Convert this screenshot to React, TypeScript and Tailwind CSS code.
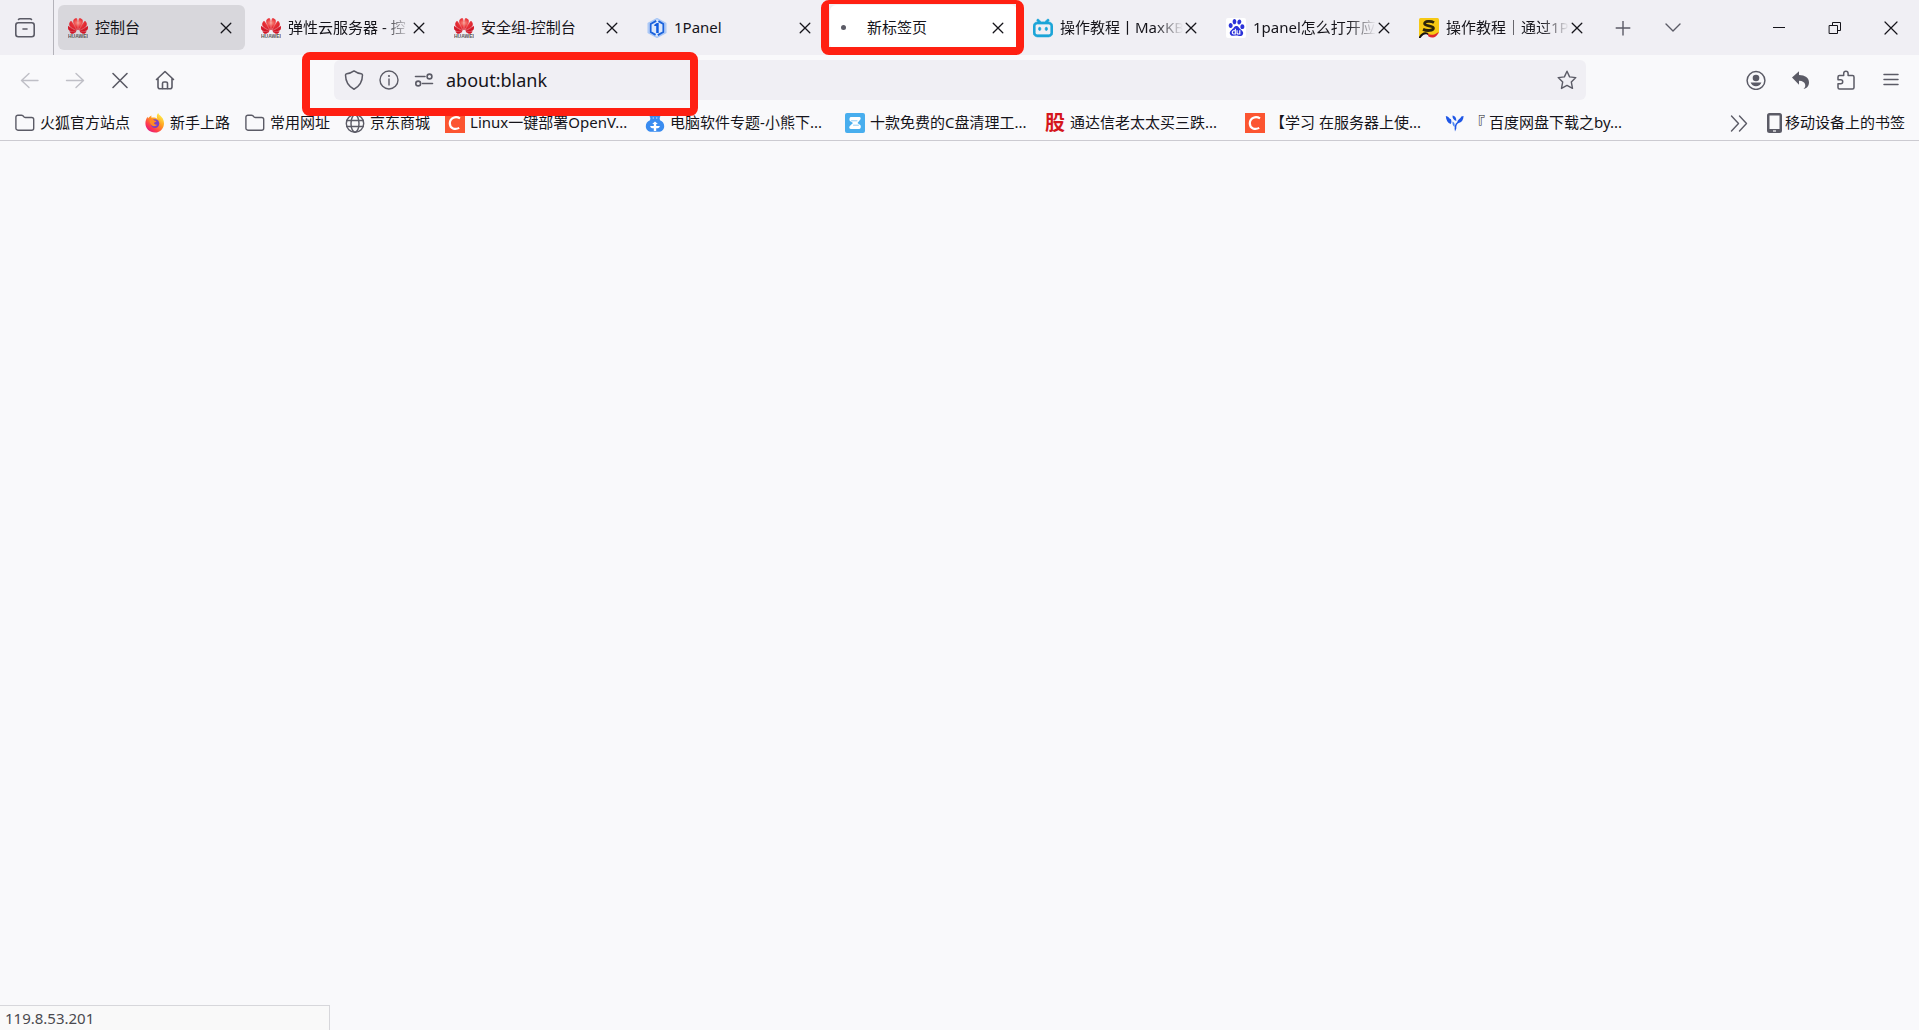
import type { ReactNode, SVGProps } from "react";
import { SiBaidu, SiBilibili, SiHuawei } from "react-icons/si";
import { twMerge } from "tailwind-merge";

function Icon({ className, children, ...props }: SVGProps<SVGSVGElement>) {
	return (
		<svg
			viewBox="0 0 20 20"
			fill="none"
			stroke="currentColor"
			strokeWidth="1.4"
			strokeLinecap="round"
			strokeLinejoin="round"
			aria-hidden="true"
			className={twMerge("w-5 h-5 shrink-0", className)}
			{...props}
		>
			{children}
		</svg>
	);
}

function HuaweiIcon() {
	return (
		<span className="flex flex-col items-center w-5 h-5 shrink-0 overflow-hidden">
			<svg width="0" height="0" className="absolute" aria-hidden="true">
				<radialGradient id="petal" cx="0.5" cy="0.3" r="0.6">
					<stop offset="0" stopColor="#fa9184" />
					<stop offset="0.45" stopColor="#ea3338" />
					<stop offset="1" stopColor="#cf1526" />
				</radialGradient>
			</svg>
			<SiHuawei
				fill="url(#petal)"
				stroke="url(#petal)"
				strokeWidth="0.7"
				preserveAspectRatio="none"
				viewBox="0 2.5 24 19"
				className="w-5 h-4 shrink-0"
			/>
			<svg viewBox="0 0 20 4" className="w-5 h-1 shrink-0" aria-hidden="true">
				<text
					x="10"
					y="3.8"
					textAnchor="middle"
					fontFamily="Liberation Sans, sans-serif"
					fontSize="5"
					fontWeight="700"
					fill="#5a5555"
				>
					HUAWEI
				</text>
			</svg>
		</span>
	);
}

function OnePanelIcon() {
	return (
		<Icon>
			<path
				d="M10 .6 18.800 5.300V14.700L10 19.400 1.200 14.700V5.300Z"
				fill="#dbe7fb"
				stroke="#a9c7f6"
				strokeWidth="1.400"
			/>
			<path
				d="M9.200 2.900 3.600 6v8l5 2.900M11.400 3.100 16.400 6v8l-5.600 3.100"
				stroke="#1a62dc"
				strokeWidth="1.900"
				strokeLinecap="butt"
				strokeLinejoin="miter"
			/>
			<path d="M7.300 6.800 9.800 5h1.900v10H9.200V7.900H7.300Z" fill="#0f5ade" stroke="none" />
		</Icon>
	);
}

function BaiduIcon() {
	return (
		<span className="flex items-center justify-center w-5 h-5 shrink-0 rounded-xs bg-white">
			<SiBaidu className="w-[17px] h-[17px] text-[#2b32d9]" />
		</span>
	);
}

function SIcon() {
	return (
		<Icon stroke="none">
			<rect width="20" height="20" rx="1.5" fill="#f6c915" />
			<path d="M0 20v-1c2.400-4.600 6-5.600 9-4l2 5Z" fill="#15120f" />
			<path d="M1.500 20c3.600-4.800 5.800-4.400 8.600-2.400S16 18.400 20 15v5Z" fill="#efeef4" />
			<path d="M8.500 15.500c3 2 6.500 2 11-1.500-1 5-6 7-10 4.500Z" fill="#e0272c" />
			<path
				d="M15 4.600c-3-1.800-9.400-1.800-9.400 1.200 0 2.600 9 1.400 8.800 4.400-.2 2.600-6.400 3-10.400 1.200"
				fill="none"
				stroke="#2b240c"
				strokeWidth="2.800"
				strokeLinecap="butt"
			/>
		</Icon>
	);
}

function FolderIcon() {
	return (
		<Icon className="text-[#5b5b66]">
			<path d="M.9 4.200A2 2 0 0 1 2.900 2.200h3.600a2 2 0 0 1 1.400.6l1.200 1.200a2 2 0 0 0 1.400.5h6.200a2 2 0 0 1 2 2v8.700a2 2 0 0 1-2 2H2.900a2 2 0 0 1-2-2Z" />
		</Icon>
	);
}

function FirefoxIcon() {
	return (
		<Icon stroke="none">
			<defs>
				<linearGradient id="fox" x1="0.85" y1="0.1" x2="0.2" y2="0.95">
					<stop offset="0" stopColor="#fff04a" />
					<stop offset="0.4" stopColor="#ff9a1f" />
					<stop offset="0.75" stopColor="#ff3c4c" />
					<stop offset="1" stopColor="#e31a80" />
				</linearGradient>
			</defs>
			<path
				d="M13.200 0c.4 2 3.300 3.200 4.600 5.400 3.400 6.400-.6 14.200-7.800 14.200C4.600 19.600.4 15.600.4 10.300c0-2.500.9-4.900 2.300-6.500L3 5.600C4 4 5.200 3 6.600 2.500c-.4.900-.3 1.700 0 2.300 2.100-.5 4.400-.1 5.800 1.300C11.300 3.600 12 1.200 13.200 0Z"
				fill="url(#fox)"
			/>
			<circle cx="10" cy="10.600" r="4.300" fill="#7a3fc8" />
			<path
				d="M4.600 6.800c1.800-.6 3.800-.3 4.800.8l2 .5c-.2 1-1.500 1.400-2.300 1.700-.4 1.400 1.400 2.400 3.200 1.700-1 1.700-4 2.300-5.700.7C5 10.800 4.400 9 4.600 6.800Z"
				fill="#ff8a24"
			/>
		</Icon>
	);
}

function GlobeIcon() {
	return (
		<Icon className="text-[#5b5b66]">
			<circle cx="10" cy="10.500" r="8.700" />
			<ellipse cx="10" cy="10.500" rx="4" ry="8.700" />
			<path d="M1.800 7.500h16.400M1.800 13.500h16.400" />
		</Icon>
	);
}

function CsdnIcon() {
	return (
		<Icon stroke="none">
			<rect width="20" height="20" fill="#fc5531" />
			<path
				d="M15 5.400C11 2.800 5 4.400 4.800 10.200c0 5.600 5.400 6.800 9.400 4.700"
				fill="none"
				stroke="#fff"
				strokeWidth="2.200"
				strokeLinecap="butt"
			/>
		</Icon>
	);
}

function BearIcon() {
	return (
		<Icon stroke="none">
			<path
				d="M5.200 1.500C4.400 2.500 4.600 4 5.400 5L5 7.200C2.400 8.200.8 10.400.8 13.200c0 3.300 2.500 5.600 5.700 5.600h7c3.200 0 5.700-2.300 5.700-5.600 0-2.800-1.600-5-4.200-6L14.600 5c.8-1 1-2.500.2-3.500Z"
				fill="#3a8cf0"
			/>
			<path
				d="M10 8.500 12.800 11h-1.600v2h3.600c0 1.800-1.900 2.500-3.600 2.300V18H8.800v-2.700c-1.700.2-3.600-.5-3.600-2.300h3.600v-2H7.200Z"
				fill="#fff"
			/>
			<circle cx="8.300" cy="5" r="0.8" fill="#b8d6fb" />
			<circle cx="11.700" cy="5" r="0.8" fill="#b8d6fb" />
		</Icon>
	);
}

function ZIcon() {
	return (
		<Icon stroke="none">
			<rect width="20" height="20" rx="2" fill="#48aeee" />
			<path
				d="M6 4h8.500c1 0 1.500 1.200 1 2.200L12.500 10l3 2.200c.8 1.400.2 3.800-1.500 3.800H6c-1.800 0-2.200-2-1.200-3L8 10 5 8C4 6.500 4.500 4 6 4Z"
				fill="#fff"
			/>
			<path d="M6.500 7.800h5.500M8.500 12.200h5" stroke="#8fccf4" strokeWidth="1" />
		</Icon>
	);
}

function StockIcon() {
	return (
		<span className="flex items-center justify-center w-5 h-5 shrink-0 text-xl leading-5 font-bold text-[#d5161c]">
			股
		</span>
	);
}

function SproutIcon() {
	return (
		<Icon stroke="none">
			<path d="M.8 3c2.600.2 3 2.400 5.200 3.200C6.600 8 6.600 9.500 5.700 11 2.800 10 1 7 .8 3Z" fill="#1f57e6" />
			<path d="M7.500 8.500c1.700.6 2.600 2.400 2.100 5.400-1.800-1-2.400-3-2.100-5.400Z" fill="#4a86f5" />
			<path d="M7.500 2.500c2.300.3 4 2 3.800 5.500C8.800 7.500 7.300 5.300 7.500 2.500Z" fill="#1f57e6" />
			<path
				d="M18.600 3c-.2 3.600-1.600 6-4.300 6.800-2.400.8-3.200 2.800-3 5.700l-1.300 3c-.9-4-.4-7.400 2.300-9.400.3-2.800 2.800-2.600 4-5.600Z"
				fill="#1f57e6"
			/>
		</Icon>
	);
}

function PhoneIcon() {
	return (
		<svg viewBox="0 0 15 20" className="w-[15px] h-5 shrink-0" aria-hidden="true">
			<path
				d="M2.500 0h10A2.500 2.500 0 0 1 15 2.500v15a2.500 2.500 0 0 1-2.500 2.500h-10A2.500 2.500 0 0 1 0 17.500v-15A2.500 2.500 0 0 1 2.500 0ZM2.500 2.500v13.500h10V2.500Z"
				fill="#5b5b66"
				fillRule="evenodd"
			/>
			<path d="M6 18h3" stroke="#fff" strokeWidth="1.200" />
		</svg>
	);
}

interface ITab {
	title: string;
	icon: ReactNode;
	state?: "pressed" | "active";
	faded?: boolean;
}

const tabs: ITab[] = [
	{ title: "控制台", icon: <HuaweiIcon />, state: "pressed" },
	{ title: "弹性云服务器 - 控", icon: <HuaweiIcon />, faded: true },
	{ title: "安全组-控制台", icon: <HuaweiIcon /> },
	{ title: "1Panel", icon: <OnePanelIcon /> },
	{ title: "新标签页", icon: null, state: "active" },
	{
		title: "操作教程丨MaxKB",
		icon: (
			<SiBilibili
				className="w-5 h-5 shrink-0 text-[#1ba5d8]"
				stroke="currentColor"
				strokeWidth="0.8"
			/>
		),
		faded: true,
	},
	{ title: "1panel怎么打开应", icon: <BaiduIcon />, faded: true },
	{ title: "操作教程｜通过1P", icon: <SIcon />, faded: true },
];

const bookmarks: { title: string; icon: ReactNode; long?: boolean }[] = [
	{ title: "火狐官方站点", icon: <FolderIcon /> },
	{ title: "新手上路", icon: <FirefoxIcon /> },
	{ title: "常用网址", icon: <FolderIcon /> },
	{ title: "京东商城", icon: <GlobeIcon /> },
	{ title: "Linux一键部署OpenV...", icon: <CsdnIcon />, long: true },
	{ title: "电脑软件专题-小熊下...", icon: <BearIcon />, long: true },
	{ title: "十款免费的C盘清理工...", icon: <ZIcon />, long: true },
	{ title: "通达信老太太买三跌...", icon: <StockIcon />, long: true },
	{ title: "【学习 在服务器上使...", icon: <CsdnIcon />, long: true },
	{ title: "『 百度网盘下载之by...", icon: <SproutIcon />, long: true },
];

function Tab({ title, icon, state, faded }: ITab) {
	return (
		<div
			className={twMerge(
				"relative flex items-center flex-1 min-w-0 max-w-[187px] h-[45px] pl-[10px] pr-[11px] rounded-md",
				state === "pressed" && "bg-[#d8d7dc]",
				state === "active" && "bg-white",
			)}
		>
			{state === "active" ? (
				<span className="w-5 pl-px shrink-0">
					<span className="block w-[5px] h-[5px] rounded-full bg-[#5b5b66]" />
				</span>
			) : (
				icon
			)}
			<span
				className={twMerge(
					"flex-1 min-w-0 ml-[7px] pb-[2px] overflow-hidden whitespace-nowrap",
					faded && "[mask-image:linear-gradient(to_left,transparent,black_28px)]",
				)}
			>
				{title}
			</span>
			<button aria-label="关闭标签页" className="flex items-center justify-center w-4 h-5 shrink-0">
				<Icon strokeWidth="1.3">
					<path d="m5.200 5.200 9.600 9.600m0-9.600-9.600 9.600" />
				</Icon>
			</button>
			{state === "active" && (
				<span className="absolute -left-[9px] -right-[7px] -top-[5px] -bottom-[5px] rounded-lg border-8 border-t-4 border-[#ff2012] pointer-events-none" />
			)}
		</div>
	);
}

function ToolButton({
	label,
	className,
	children,
}: {
	label: string;
	className?: string;
	children: ReactNode;
}) {
	return (
		<button
			aria-label={label}
			className={twMerge(
				"flex items-center justify-center w-[45px] h-10 shrink-0 text-[#5b5b66]",
				className,
			)}
		>
			{children}
		</button>
	);
}

function TabStrip() {
	return (
		<div className="flex items-center h-[55px] bg-[#f0eff4]">
			<ToolButton label="Firefox View" className="w-[53px] pr-[3px]">
				<Icon strokeWidth="1.600">
					<path d="M3.500 1.500C4 .9 4.400.8 5 .8h10c.6 0 1 .1 1.500.7" />
					<rect x="0.800" y="4.700" width="18.400" height="14" rx="2.500" />
					<path d="M8 11h4" />
				</Icon>
			</ToolButton>
			<div className="w-px h-full bg-[#b4b3ba] shrink-0" />
			<div className="flex items-center gap-[6px] flex-1 min-w-0 pl-1">
				{tabs.map((tab) => (
					<Tab key={tab.title} {...tab} />
				))}
				<div className="flex">
					<ToolButton label="新建标签页" className="w-[50px] -ml-1">
						<Icon strokeLinecap="butt">
							<path d="M10 3v14.500M2.700 10h14.600" />
						</Icon>
					</ToolButton>
					<ToolButton label="列出所有标签页" className="w-[50px]">
						<Icon>
							<path d="m3 6 7 7 7-7" />
						</Icon>
					</ToolButton>
				</div>
			</div>
			<div className="flex">
				<ToolButton label="最小化" className="w-14 text-[#15141a]">
					<Icon strokeWidth="1" strokeLinecap="butt">
						<path d="M4 9.500h12" />
					</Icon>
				</ToolButton>
				<ToolButton label="还原" className="w-14 text-[#15141a]">
					<Icon strokeWidth="1" strokeLinejoin="miter">
						<path d="M4.500 7.500h8v8h-8Z" />
						<path d="M7.500 7.500v-3h8v8h-3" />
					</Icon>
				</ToolButton>
				<ToolButton label="关闭" className="w-14 text-[#15141a]">
					<Icon strokeWidth="1.200">
						<path d="m4 4 12 12M16 4 4 16" />
					</Icon>
				</ToolButton>
			</div>
		</div>
	);
}

function NavBar() {
	return (
		<div className="flex items-center h-[50px] pl-[7px] pr-[6px]">
			<ToolButton label="后退" className="text-[#bfbfc6]">
				<Icon>
					<path d="M18 10.500H1.500M9 3.500l-7.500 7L9 17.500" />
				</Icon>
			</ToolButton>
			<ToolButton label="前进" className="text-[#bfbfc6]">
				<Icon>
					<path d="M1.500 10.500H18.500M11 3.500l7.500 7-7.500 7" />
				</Icon>
			</ToolButton>
			<ToolButton label="停止">
				<Icon strokeWidth="1.600">
					<path d="m3 3.500 14 14m0-14-14 14" />
				</Icon>
			</ToolButton>
			<ToolButton label="主页">
				<Icon strokeWidth="1.600">
					<path d="M1.500 9.500 10 1.500l8.500 8M3 8.500v8.200a2 2 0 0 0 2 2h10a2 2 0 0 0 2-2V8.500" />
					<path d="M7.500 18.500v-5a1.500 1.500 0 0 1 1.500-1.500h2a1.500 1.500 0 0 1 1.500 1.500v5" />
				</Icon>
			</ToolButton>
			<div className="relative flex items-center flex-1 min-w-0 h-10 mx-[147px] px-[2px] rounded-md bg-[#f0eff4]">
				<ToolButton label="跟踪保护" className="w-[35px]">
					<Icon strokeWidth="1.500">
						<path d="M10 .9c-2 1.500-4.800 2.600-7.300 2.900-.7.100-1.200.6-1.200 1.300C1.600 11 4 16.300 10 19.200c6-2.900 8.400-8.200 8.500-14.100 0-.7-.5-1.200-1.200-1.300C14.800 3.500 12 2.400 10 .9Z" />
					</Icon>
				</ToolButton>
				<ToolButton label="网站信息" className="w-[35px]">
					<Icon>
						<circle cx="10" cy="10" r="9" />
						<path d="M10 9v6" />
						<circle cx="10" cy="6" r="0.400" />
					</Icon>
				</ToolButton>
				<ToolButton label="权限" className="w-[35px]">
					<Icon strokeWidth="1.600">
						<path d="M1.500 6.500H11M8.500 13.500H18.500" />
						<circle cx="15.500" cy="6.500" r="2.400" />
						<circle cx="4.200" cy="13.500" r="2.400" />
					</Icon>
				</ToolButton>
				<input
					aria-label="地址"
					defaultValue="about:blank"
					className="flex-1 min-w-0 h-10 px-[5px] bg-transparent text-lg text-[#15141a] outline-none"
				/>
				<ToolButton label="添加书签" className="w-[35px]">
					<Icon>
						<path d="m10 1.200 2.600 5.700 6.200.7-4.500 4.300 1.200 6.500-5.500-3-5.500 3 1.200-6.500L1.200 7.600l6.200-.7Z" />
					</Icon>
				</ToolButton>
				<span className="absolute -top-2 -left-8 w-[396px] h-16 rounded-lg border-8 border-[#ff2012] pointer-events-none" />
			</div>
			<ToolButton label="账户">
				<Icon strokeWidth="1.500">
					<circle cx="10" cy="10.500" r="8.900" />
					<circle cx="10" cy="8" r="3.300" fill="currentColor" stroke="none" />
					<path d="M4.600 12.500h10.800c-.8 2.400-2.800 3.800-5.400 3.800s-4.600-1.400-5.400-3.800Z" fill="currentColor" stroke="none" />
				</Icon>
			</ToolButton>
			<ToolButton label="撤销">
				<Icon fill="currentColor" stroke="none">
					<path d="M1 7.500 8 1.200v3.900c6 .1 10 2.800 10 7.500 0 3.600-2.500 6-5.500 6.400 1.500-1.200 2-2.600 1.700-4.300-.4-2.300-2.500-3.800-6.200-3.900v4Z" />
				</Icon>
			</ToolButton>
			<ToolButton label="扩展">
				<Icon strokeWidth="1.500">
					<path d="M3.500 5.500h4.200V3.400a2.200 2.200 0 0 1 4.400 0v2.100h4.400a1.500 1.500 0 0 1 1.500 1.500v10.500a1.500 1.500 0 0 1-1.500 1.500h-13A1.500 1.500 0 0 1 2 17.500v-3.700h2.700a2 2 0 0 0 0-4H2V7a1.500 1.500 0 0 1 1.500-1.500Z" />
				</Icon>
			</ToolButton>
			<ToolButton label="菜单">
				<Icon strokeWidth="1.500">
					<path d="M3 4.500h14M3 9.500h14M3 14.500h14" />
				</Icon>
			</ToolButton>
		</div>
	);
}

function BookmarksBar() {
	return (
		<div className="flex items-center h-9 pt-px pl-[15px] pr-[14px] border-b border-[#cccbd1]">
			<div className="flex flex-1 min-w-0 gap-[15px] overflow-hidden">
				{bookmarks.map(({ title, icon, long }) => (
					<a
						key={title}
						href="#"
						className={twMerge(
							"flex items-center gap-[5px] shrink-0 whitespace-nowrap",
							long && "w-[185px]",
						)}
					>
						{icon}
						<span className="pb-[2px]">{title}</span>
					</a>
				))}
			</div>
			<ToolButton label="更多书签" className="w-5 h-5 mr-[18px]">
				<Icon>
					<path d="m2.500 3 7 7.500-7 7.500M10.500 3l7 7.500-7 7.500" />
				</Icon>
			</ToolButton>
			<a href="#" className="flex items-center gap-[3px] whitespace-nowrap">
				<PhoneIcon />
				<span className="pb-[2px]">移动设备上的书签</span>
			</a>
		</div>
	);
}

function App() {
	return (
		<div className="relative flex flex-col h-screen overflow-hidden bg-[#f9f9fb] font-['Noto_Sans','Noto_Sans_CJK_SC',sans-serif] text-[15px] leading-5 text-[#15141a]">
			<TabStrip />
			<NavBar />
			<BookmarksBar />
			<main className="flex-1" />
			<div className="absolute bottom-0 left-0 w-[330px] h-[25px] pl-[5px] leading-6 border-t border-r border-[#d7d7db] bg-[#f9f9f9] text-[#4a4a4f]">
				119.8.53.201
			</div>
		</div>
	);
}

export default App;
